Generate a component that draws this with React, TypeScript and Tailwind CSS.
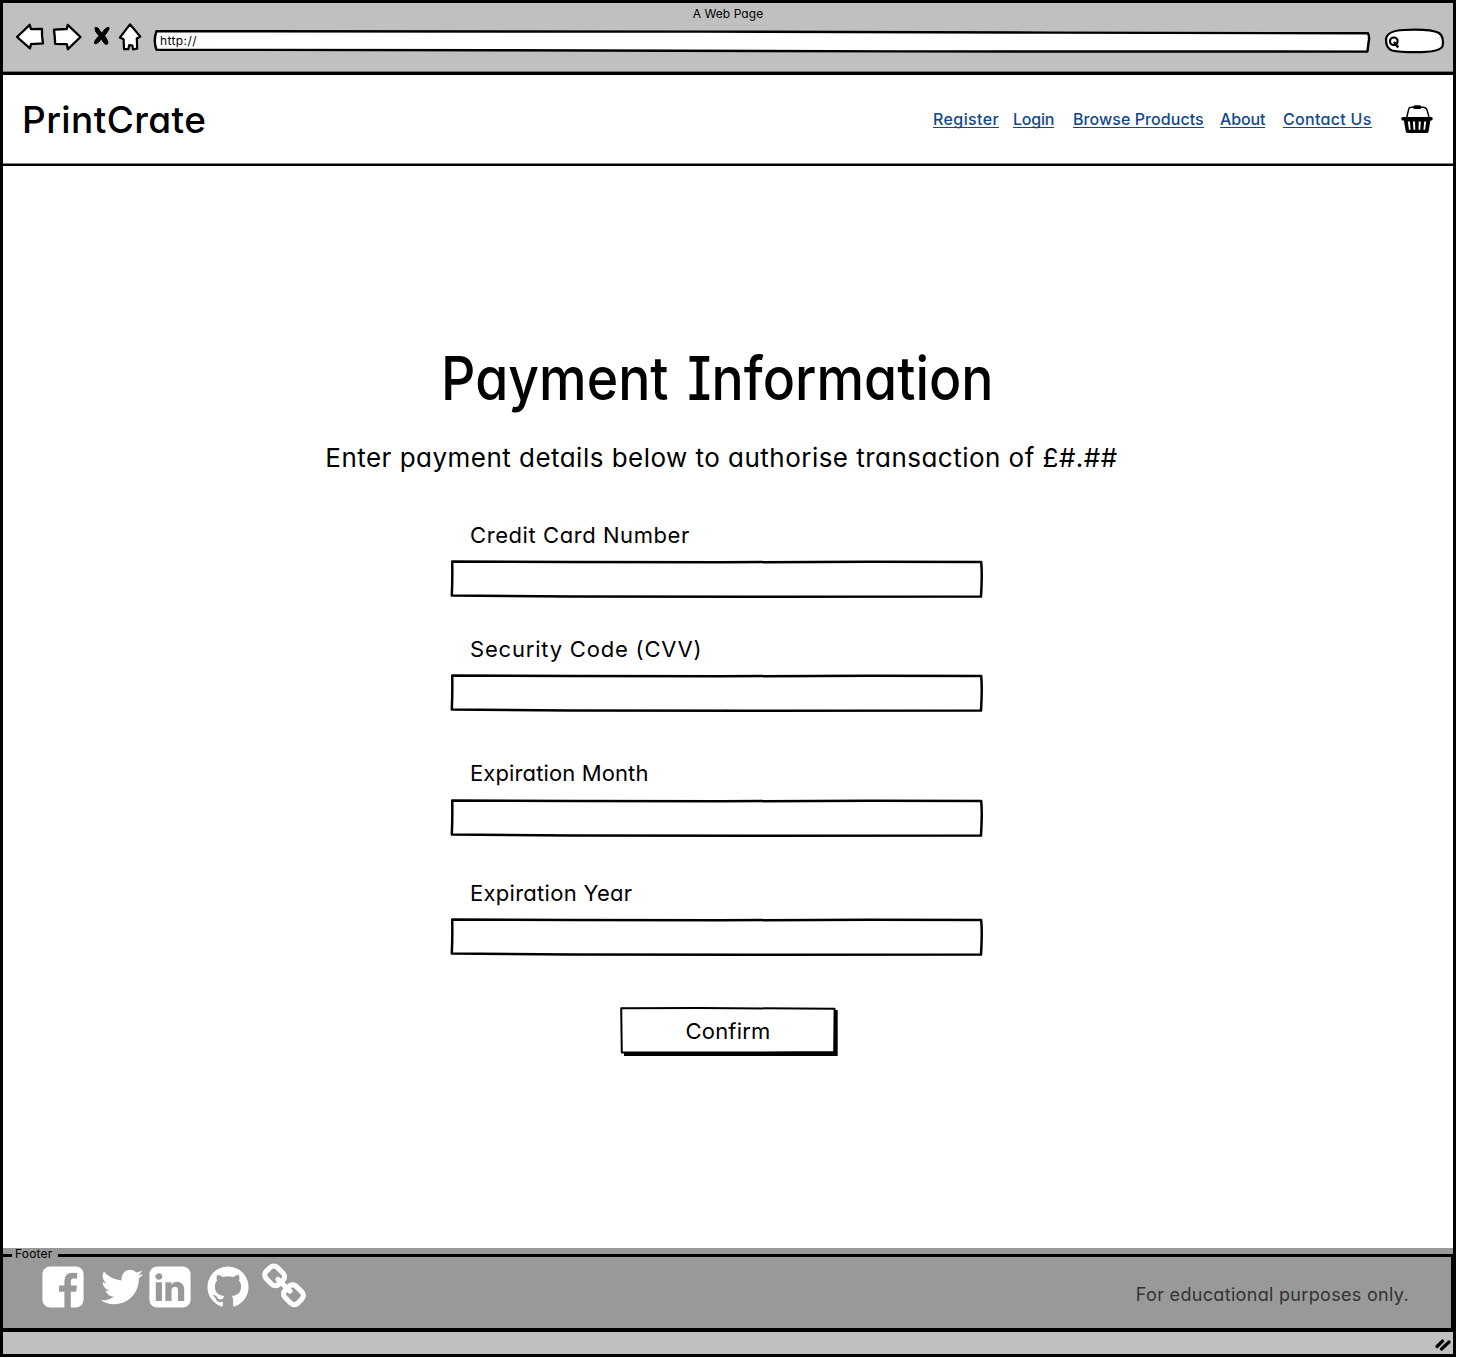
import React from 'react';

const FONT = "font-['Inter','Liberation_Sans',sans-serif] font-[440] [font-feature-settings:'cv11','cv08']";

function BackIcon() {
  return (
    <svg className="ml-3 h-[30px] w-8 shrink-0" viewBox="15 22 32 30" fill="white" stroke="black" strokeWidth="2.3" strokeLinejoin="round">
      <path d="M17 37 L29.7 24.8 L31 29.2 L42 28.8 Q41.6 36 43 43.3 L31 44.2 L30 48.3 Z" />
    </svg>
  );
}

function ForwardIcon() {
  return (
    <svg className="ml-1 h-[30px] w-8 shrink-0" viewBox="51 22 32 30" fill="white" stroke="black" strokeWidth="2.3" strokeLinejoin="round">
      <path d="M54 29.6 L66.8 29 L67.7 24.8 L80.5 37 L67.9 49.2 L66.8 44.2 L55.2 43.9 Q54.8 36 54 29.6 Z" />
    </svg>
  );
}

function StopIcon() {
  return (
    <svg className="ml-2 h-[30px] w-5 shrink-0" viewBox="91 22 20 30" fill="black" stroke="black" strokeWidth="1" strokeLinejoin="round">
      <path d="M95 27.5 Q98 26.5 100 31 L102 33.4 Q105 27 109 27.4 Q110 29 104.6 35.6 Q109 42 107.5 44 Q105 46 101.3 38.8 Q98.6 43.5 95 44 Q93 42 99 35.8 Q94 31 95 27.5 Z" />
    </svg>
  );
}

function HomeIcon() {
  return (
    <svg className="ml-1.5 h-[30px] w-[26px] shrink-0" viewBox="117 22 26 30" fill="white" stroke="black" strokeWidth="2.2" strokeLinejoin="round">
      <path d="M130 24.3 L140.3 36.6 L136.8 38.4 L137.2 48.6 L133 49.3 L132.4 45.6 L129.2 45.2 L128.3 49.2 L124 49.2 L123.6 39.2 L119.8 37.6 Z" />
    </svg>
  );
}

function BasketIcon() {
  return (
    <svg className="mb-0.5 h-[30px] w-8" viewBox="1401 104 32 30">
      <path d="M1406.8 117 L1408.9 108.4 Q1409.4 107.4 1411.5 107.2 L1423.5 107.2 Q1426 107.4 1426.8 109.4 L1429 117" fill="none" stroke="black" strokeWidth="1.5" />
      <rect x="1413.3" y="105.2" width="8" height="3.9" rx="1.6" />
      <rect x="1401.3" y="117" width="31.4" height="3.6" rx="1.5" />
      <path d="M1403.6 119 L1430.6 119 L1428.6 131.6 Q1428.3 132.9 1427 132.9 L1407.4 132.9 Q1406 132.9 1405.8 131.6 Z" />
      <path d="M1407.8 121.6 L1409.9 121.6 L1410.6 129.8 L1409 129.8 Z M1412.9 121.6 L1415 121.6 L1415.3 129.8 L1413.5 129.8 Z M1418.7 121.6 L1420.8 121.6 L1420.3 129.8 L1418.5 129.8 Z M1424.2 121.6 L1426.3 121.6 L1425 129.8 L1423.4 129.8 Z" fill="white" />
    </svg>
  );
}

function Social({ d, className }: { d: string; className: string }) {
  return (
    <svg viewBox="0 0 1792 1792" fill="white" className={className}>
      <path d={d} />
    </svg>
  );
}

const FACEBOOK =
  'M1376 128q119 0 203.5 84.5t84.5 203.5v960q0 119-84.5 203.5t-203.5 84.5h-188v-595h199l30-232h-229v-148q0-56 23.5-84t91.5-28l122-1v-207q-63-9-178-9-136 0-217.5 80t-81.5 226v171h-200v232h200v595h-532q-119 0-203.5-84.5t-84.5-203.5v-960q0-119 84.5-203.5t203.5-84.5h960z';
const TWITTER =
  'M1684 408q-67 98-162 167 1 14 1 42 0 130-38 259.5t-115.5 248.5-184.5 210.5-258 146-323 54.5q-271 0-496-145 35 4 78 4 225 0 401-138-105-2-188-64.5t-114-159.5q33 5 61 5 43 0 85-11-112-23-185.5-111.5t-73.5-205.5v-4q68 38 146 41-66-44-105-115t-39-154q0-88 44-163 121 149 294.5 238.5t371.5 99.5q-8-38-8-74 0-134 94.5-228.5t228.5-94.5q140 0 236 102 109-21 205-78-37 115-142 178 93-10 186-50z';
const LINKEDIN =
  'M365 1414h231v-694h-231v694zm246-908q-1-52-36-86t-93-34-94.5 34-36.5 86q0 51 35.5 85.5t92.5 34.5h1q59 0 95-34.5t36-85.5zm585 908h231v-398q0-154-73-233t-193-79q-136 0-209 117h2v-101h-231q3 66 0 694h231v-388q0-38 7-56 15-35 45-59.5t74-24.5q116 0 116 157v371zm468-998v960q0 119-84.5 203.5t-203.5 84.5h-960q-119 0-203.5-84.5t-84.5-203.5v-960q0-119 84.5-203.5t203.5-84.5h960q119 0 203.5 84.5t84.5 203.5z';
const GITHUB =
  'M896 128q209 0 385.5 103t279.5 279.5 103 385.5q0 251-146.5 451.5t-378.5 277.5q-27 5-40-7t-13-30q0-3 .5-76.5t.5-134.5q0-97-52-142 57-6 102.5-18t94-39 81-66.5 53-105 20.5-150.5q0-119-79-206 37-91-8-204-28-9-81 11t-92 44l-38 24q-93-26-192-26t-192 26q-16-11-42.5-27t-83.5-38.5-85-13.5q-45 113-8 204-79 87-79 206 0 85 20.5 150t52.5 105 80.5 67 94 39 102.5 18q-39 36-49 103-21 10-45 15t-57 5-65.5-21.5-55.5-62.5q-19-32-48.5-52t-49.5-24l-20-3q-21 0-29 4.5t-5 11.5 9 14 13 12l7 5q22 10 43.5 38t31.5 51l10 23q13 38 44 61.5t67 30 69.5 7 55.5-3.5l23-4q0 38 .5 88.5t.5 54.5q0 18-13 30t-40 7q-232-77-378.5-277.5t-146.5-451.5q0-209 103-385.5t279.5-279.5 385.5-103z';
const CHAIN =
  'M1520 1216q0-40-28-68l-208-208q-28-28-68-28-42 0-72 32 3 3 19 18.5t21.5 21.5 15 19 13 25.5 3.5 27.5q0 40-28 68t-68 28q-15 0-27.5-3.5t-25.5-13-19-15-21.5-21.5-18.5-19q-33 31-33 73 0 40 28 68l206 207q27 27 68 27 40 0 68-26l147-146q28-28 28-67zm-703-705q0-40-28-68l-206-207q-28-28-68-28-39 0-68 27l-147 146q-28 28-28 67 0 40 28 68l208 208q27 27 68 27 42 0 72-31-3-3-19-18.5t-21.5-21.5-15-19-13-25.5-3.5-27.5q0-40 28-68t68-28q15 0 27.5 3.5t25.5 13 19 15 21.5 21.5 18.5 19q33-31 33-73zm895 705q0 120-85 203l-147 146q-83 83-203 83-121 0-204-85l-206-207q-83-83-83-203 0-123 88-209l-88-88q-86 88-208 88-120 0-204-84l-208-208q-84-84-84-204t85-203l147-146q83-83 203-83 121 0 204 85l206 207q83 83 83 203 0 123-88 209l88 88q86-88 208-88 120 0 204 84l208 208q84 84 84 204z';

const LINKS = [
  { label: 'Register', box: 'w-[66px] mr-3.5', spacing: 'tracking-[0.4px]' },
  { label: 'Login', box: 'w-[41px] mr-[19px]', spacing: 'tracking-[-0.25px]' },
  { label: 'Browse Products', box: 'w-[131px] mr-4', spacing: 'tracking-[0.06px]' },
  { label: 'About', box: 'w-[45px] mr-[18px]', spacing: 'tracking-[-0.1px]' },
  { label: 'Contact Us', box: 'w-[89px] mr-[29px]', spacing: 'tracking-[0.3px]' },
];

const FIELDS = [
  { label: 'Credit Card Number', spacing: 'tracking-[0.57px]', gap: 'mb-9', offset: 'mt-[10px]' },
  { label: 'Security Code (CVV)', spacing: 'tracking-[0.8px]', gap: 'mb-[46px]', offset: 'mt-[10px]' },
  { label: 'Expiration Month', spacing: 'tracking-[0.12px]', gap: 'mb-[41px]', offset: 'mt-[11px]' },
  { label: 'Expiration Year', spacing: 'tracking-[0.28px]', gap: 'mb-[51px]', offset: 'mt-[10px]' },
];

function Field({ label, spacing, gap, offset }: { label: string; spacing: string; gap: string; offset: string }) {
  return (
    <label className={`block w-[534px] ${gap}`}>
      <span className={`block pl-5 text-[22px] leading-[30px] ${spacing}`}>{label}</span>
      <span className={`relative block h-[38px] ${offset}`}>
        <svg className="absolute inset-0 h-full w-full" viewBox="0 0 534 38" fill="white" stroke="black" strokeLinejoin="round">
          <path
            d="M2.2 1.5 L120 1.9 L270 2.3 L420 1.7 L531.2 2 Q532.4 14 531 36.6 L300 36.7 L120 36.4 L1.8 35.6 Q2.6 18 2.2 1.5 Z"
            strokeWidth="2.5"
          />
        </svg>
        <input className="relative h-full w-full bg-transparent px-5 text-[22px] outline-none" aria-label={label} />
      </span>
    </label>
  );
}

export default function App() {
  return (
    <div className={`${FONT} flex h-[1358px] w-[1457px] flex-col bg-white text-black`}>
      <div className="flex h-[1357px] w-[1456px] flex-col border-[3px] border-black">
        <div className="h-[72px] shrink-0 border-b-[3px] border-black bg-[#c0c0c0] shadow-[inset_0_-1px_0_#777]">
          <div className="h-5 text-center text-[12px] leading-[21px] tracking-[0.05px]">A Web Page</div>
          <div className="flex h-[30px] items-start">
            <div className="-mt-px flex">
              <BackIcon />
              <ForwardIcon />
              <StopIcon />
              <HomeIcon />
            </div>
            <div className="relative ml-2 mt-[5px] h-[26px] w-[1222px] shrink-0">
              <svg className="absolute inset-0 h-full w-full" viewBox="151 28 1222 26" fill="white" stroke="black" strokeWidth="2.4" strokeLinejoin="round">
                <path d="M156.5 31.2 L700 31.6 L1050 32.6 L1368 33.3 Q1369.8 37 1368.6 42 L1367.4 51.6 L900 51.4 L500 50.2 L156.5 49.8 Q153 41 156.5 31.2 Z" />
              </svg>
              <span className="relative block pl-[9px] text-[12px] leading-[26px] tracking-[0.4px]">http://</span>
            </div>
            <svg className="ml-2.5 mt-[3px] h-7 w-16 shrink-0" viewBox="1383 26 64 28" fill="white" stroke="black" strokeWidth="2.2">
              <path d="M1386 40 C1386 33 1393 30.5 1404 30 C1416 29.4 1432 29.6 1439 33 C1443 35.5 1443.5 42 1442.5 46 C1441 51 1428 52.2 1416 52.2 C1406 52.2 1397 51.8 1392 50.5 C1388 49 1386 45 1386 40 Z" />
              <circle cx="1393.8" cy="41.3" r="3.8" strokeWidth="2.2" />
              <path d="M1394 42 L1398.2 47.4" strokeWidth="2.4" />
            </svg>
          </div>
        </div>

        <header className="flex h-[91px] shrink-0 items-center border-b-2 border-black pl-[19px] pr-5 shadow-[inset_0_-1px_0_#888]">
          <h1 className="mr-auto text-[37px] font-[450] leading-10 tracking-[0.4px]">PrintCrate</h1>
          <nav className="mb-0.5 flex text-[16px] font-[450] leading-5 text-[#12498c]">
            {LINKS.map((l) => (
              <a key={l.label} href="#" className={`h-[19px] border-b border-[#12498c] whitespace-nowrap ${l.box} ${l.spacing}`}>
                {l.label}
              </a>
            ))}
          </nav>
          <BasketIcon />
        </header>

        <main className="flex h-[1082px] shrink-0 flex-col items-center pt-[172px]">
          <h2 className="-ml-[22px] h-20 scale-x-[0.893] text-[60px] font-[500] leading-[80px] whitespace-nowrap [word-spacing:5px]">Payment Information</h2>
          <p className="-ml-[13px] mt-5 text-[26px] leading-10 tracking-[0.47px] whitespace-nowrap">
            Enter payment details below to authorise transaction of £#.##
          </p>
          <form className="-ml-[22px] mt-[42px] flex flex-col items-center">
            {FIELDS.map((f) => (
              <Field key={f.label} {...f} />
            ))}
            <button type="button" className="relative ml-[24px] h-[50px] w-[218px] pr-0.5 text-[22px] leading-[44px] tracking-[0.2px]">
              <svg className="absolute inset-0 h-full w-full" viewBox="0 0 218 50">
                <path d="M4 5 L217.7 3 L217.7 49 L4 49 Z" />
                <path d="M1.2 1.3 L80 1 L214.6 1.8 L214.2 45 L120 45.6 L1.8 45.6 Z" fill="white" stroke="black" strokeWidth="2" strokeLinejoin="round" />
              </svg>
              <span className="relative -top-px">Confirm</span>
            </button>
          </form>
        </main>

        <footer className="h-[84px] shrink-0 border-b-4 border-black bg-[#999]">
          <div className="relative mt-[6px] flex h-[74px] w-[1450px] items-start border-r-2 border-t-[3px] border-black pl-9">
            <span className="absolute -top-[9px] left-[9px] bg-[#999] pl-[3px] pr-[5px] text-[12px] leading-3 tracking-[0.2px]">Footer</span>
            <Social d={FACEBOOK} className="mt-1.5 size-12" />
            <Social d={TWITTER} className="ml-[11px] mt-1.5 size-12" />
            <Social d={LINKEDIN} className="mt-1.5 size-12" />
            <Social d={GITHUB} className="ml-[10px] mt-1.5 size-12" />
            <Social d={CHAIN} className="ml-2 mt-1.5 size-12" />
            <span className="ml-auto mr-[42px] mt-6 text-[18px] leading-7 tracking-[0.32px] text-[#333]">For educational purposes only.</span>
          </div>
        </footer>
        <div className="flex flex-1 items-center justify-end bg-[#c0c0c0] pt-1">
          <svg className="h-4 w-[18px]" viewBox="1435 1338 18 16" stroke="black" strokeWidth="3.2" strokeLinecap="round">
            <path d="M1437 1347.5 L1442.6 1342 M1441.5 1350 L1449 1343" />
          </svg>
        </div>
      </div>
    </div>
  );
}
